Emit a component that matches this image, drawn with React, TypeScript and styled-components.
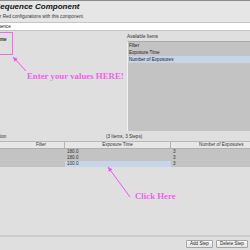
import { createGlobalStyle, styled } from 'styled-components';

const GlobalStyle = createGlobalStyle`
  html, body {
    margin: 0;
    padding: 0;
    background: #dfdfdf;
  }
  * {
    box-sizing: border-box;
  }
`;

const availableItems = ['Filter', 'Exposure Time', 'Number of Exposures'];

const steps = [
  { filter: '', exposure: '180.0', count: '3' },
  { filter: '', exposure: '180.0', count: '3' },
  { filter: '', exposure: '100.0', count: '3' },
];

function Arrow({ x1, y1, x2, y2 }: { x1: number; y1: number; x2: number; y2: number }) {
  // head sits at (x2, y2)
  const angle = Math.atan2(y2 - y1, x2 - x1);
  const len = 5;
  const spread = 0.45;
  const ax = x2 - len * Math.cos(angle - spread);
  const ay = y2 - len * Math.sin(angle - spread);
  const bx = x2 - len * Math.cos(angle + spread);
  const by = y2 - len * Math.sin(angle + spread);
  return (
    <g>
      <line x1={x1} y1={y1} x2={x2} y2={y2} stroke="#f055f0" strokeWidth={1} />
      <polygon points={`${x2},${y2} ${ax},${ay} ${bx},${by}`} fill="#f055f0" />
    </g>
  );
}

function App() {
  return (
    <Page>
      <GlobalStyle />
      <Header>
        <Title>Sequence Component</Title>
        <Subtitle>for Red configurations with this component.</Subtitle>
      </Header>
      <Crumb>Sequence</Crumb>

      <Editor>
        <LeftPane>
          <FieldBox>
            <FieldLabel>Time</FieldLabel>
          </FieldBox>
        </LeftPane>
        <RightPane>
          <SmallLabel>Available Items</SmallLabel>
          <ItemList>
            {availableItems.map((item, idx) => (
              <ListRow key={item} $selected={idx === availableItems.length - 1}>
                {item}
              </ListRow>
            ))}
          </ItemList>
        </RightPane>
      </Editor>

      <StatusRow>
        <StatusLeft>Configuration</StatusLeft>
        <SmallLabel>(3 Items, 3 Steps)</SmallLabel>
      </StatusRow>

      <Table>
        <HeadRow>
          <HeadCell $first>Filter</HeadCell>
          <HeadCell>Exposure Time</HeadCell>
          <HeadCell $last>Number of Exposures</HeadCell>
        </HeadRow>
        {steps.map((step, idx) => (
          <BodyRow key={idx}>
            <Cell />
            <Cell $selected={idx === steps.length - 1}>{step.exposure}</Cell>
            <Cell>{step.count}</Cell>
          </BodyRow>
        ))}
      </Table>

      <Spacer />

      <Footer>
        <StepButton type="button">Add Step</StepButton>
        <StepButton type="button">Delete Step</StepButton>
        <StepButton type="button">Edit</StepButton>
      </Footer>

      <Overlay width={250} height={250} viewBox="0 0 250 250">
        <Arrow x1={26} y1={71} x2={13} y2={57} />
        <Arrow x1={130} y1={197} x2={108} y2={167} />
      </Overlay>
      <Note style={{ left: 27, top: 71 }}>Enter your values HERE!</Note>
      <Note style={{ left: 135, top: 191 }}>Click Here</Note>
    </Page>
  );
}

const Page = styled.div`
  position: relative;
  width: 250px;
  height: 250px;
  overflow: hidden;
  display: flex;
  flex-direction: column;
  background: #dfdfdf;
  font-family: 'Liberation Sans', Arial, sans-serif;
  color: #222;
`;

const Header = styled.div`
  height: 22px;
  flex-shrink: 0;
  border-top: 1px solid #8c8c8c;
  background: #e6e6e6;
  display: flex;
  flex-direction: column;
  padding-top: 1px;
  overflow: hidden;
`;

const Title = styled.div`
  font-size: 8px;
  line-height: 10px;
  font-weight: bold;
  font-style: italic;
  color: #111;
  margin-left: -5px;
  white-space: nowrap;
`;

const Subtitle = styled.div`
  font-size: 4.6px;
  line-height: 6px;
  margin-top: 2px;
  margin-left: -4px;
  color: #333;
  white-space: nowrap;
`;

const Crumb = styled.div`
  height: 9px;
  flex-shrink: 0;
  background: #fff;
  border-top: 1px solid #c4c4c4;
  border-bottom: 1px solid #c4c4c4;
  font-size: 4.6px;
  line-height: 7px;
  margin-left: -10px;
  white-space: nowrap;
`;

const Editor = styled.div`
  height: 100px;
  flex-shrink: 0;
  display: flex;
`;

const LeftPane = styled.div`
  width: 125px;
  padding-top: 1px;
`;

const FieldBox = styled.div`
  width: 13px;
  height: 23px;
  border: 1px solid #ec6cec;
  border-left: none;
  overflow: hidden;
  padding-top: 4px;
`;

const FieldLabel = styled.div`
  font-size: 4.6px;
  font-weight: bold;
  color: #333;
  margin-left: -4px;
  white-space: nowrap;
`;

const RightPane = styled.div`
  flex: 1;
  display: flex;
  flex-direction: column;
  padding-left: 2px;
  padding-top: 3px;
`;

const SmallLabel = styled.div`
  font-size: 4.6px;
  line-height: 6px;
  color: #333;
  white-space: nowrap;
`;

const ItemList = styled.div`
  flex: 1;
  margin-top: 1px;
  background: #c3c3c3;
  border-top: 1px solid #aaa;
  border-left: 1px solid #f2f2f2;
  display: flex;
  flex-direction: column;
`;

const ListRow = styled.div<{ $selected?: boolean }>`
  height: 7px;
  font-size: 4.6px;
  line-height: 7px;
  padding-left: 1px;
  color: #222;
  background: ${(p) => (p.$selected ? '#c5d4e7' : 'transparent')};
`;

const StatusRow = styled.div`
  height: 10px;
  flex-shrink: 0;
  display: flex;
  align-items: flex-end;
  padding-bottom: 1px;
`;

const StatusLeft = styled.div`
  width: 127px;
  font-size: 4.6px;
  line-height: 6px;
  color: #333;
  margin-left: -21px;
  white-space: nowrap;
`;

const Table = styled.div`
  display: flex;
  flex-direction: column;
  flex-shrink: 0;
`;

const HeadRow = styled.div`
  display: grid;
  grid-template-columns: 65px 106px 104px;
  height: 8px;
  background: #e7e7e7;
  border-top: 1px solid #b8b8b8;
  border-bottom: 1px solid #b0b0b0;
`;

const HeadCell = styled.div<{ $first?: boolean; $last?: boolean }>`
  font-size: 4.6px;
  line-height: 6px;
  text-align: ${(p) => (p.$last ? 'left' : 'center')};
  color: #333;
  white-space: nowrap;
  border-right: ${(p) => (p.$last ? 'none' : '1px solid #b4b4b4')};
  padding-left: ${(p) => (p.$first ? '18px' : p.$last ? '28px' : '0')};
`;

const BodyRow = styled.div`
  display: grid;
  grid-template-columns: 65px 106px 104px;
  height: 6px;
  background: #c3c3c3;
`;

const Cell = styled.div<{ $selected?: boolean }>`
  font-size: 4.6px;
  line-height: 6px;
  padding-left: 2px;
  color: #333;
  background: ${(p) => (p.$selected ? '#c6d5e8' : 'transparent')};
`;

const Spacer = styled.div`
  flex: 1;
  border-bottom: 2px solid #cdcdcd;
`;

const Footer = styled.div`
  height: 13px;
  flex-shrink: 0;
  display: flex;
  align-items: center;
  gap: 3px;
  padding-left: 186px;
  overflow: hidden;
  white-space: nowrap;
`;

const StepButton = styled.button`
  height: 8px;
  padding: 0 3px;
  flex-shrink: 0;
  font-family: 'Liberation Sans', Arial, sans-serif;
  font-size: 4.6px;
  line-height: 6px;
  color: #222;
  background: linear-gradient(#fafafa, #e4e4e4);
  border: 1px solid #a4a4a4;
  border-radius: 1px;
`;

const Overlay = styled.svg`
  position: absolute;
  left: 0;
  top: 0;
  pointer-events: none;
`;

const Note = styled.div`
  position: absolute;
  font-family: 'Liberation Serif', 'Times New Roman', serif;
  font-size: 8.8px;
  line-height: 10px;
  font-weight: bold;
  color: #f060f0;
  white-space: nowrap;
`;

export default App;
